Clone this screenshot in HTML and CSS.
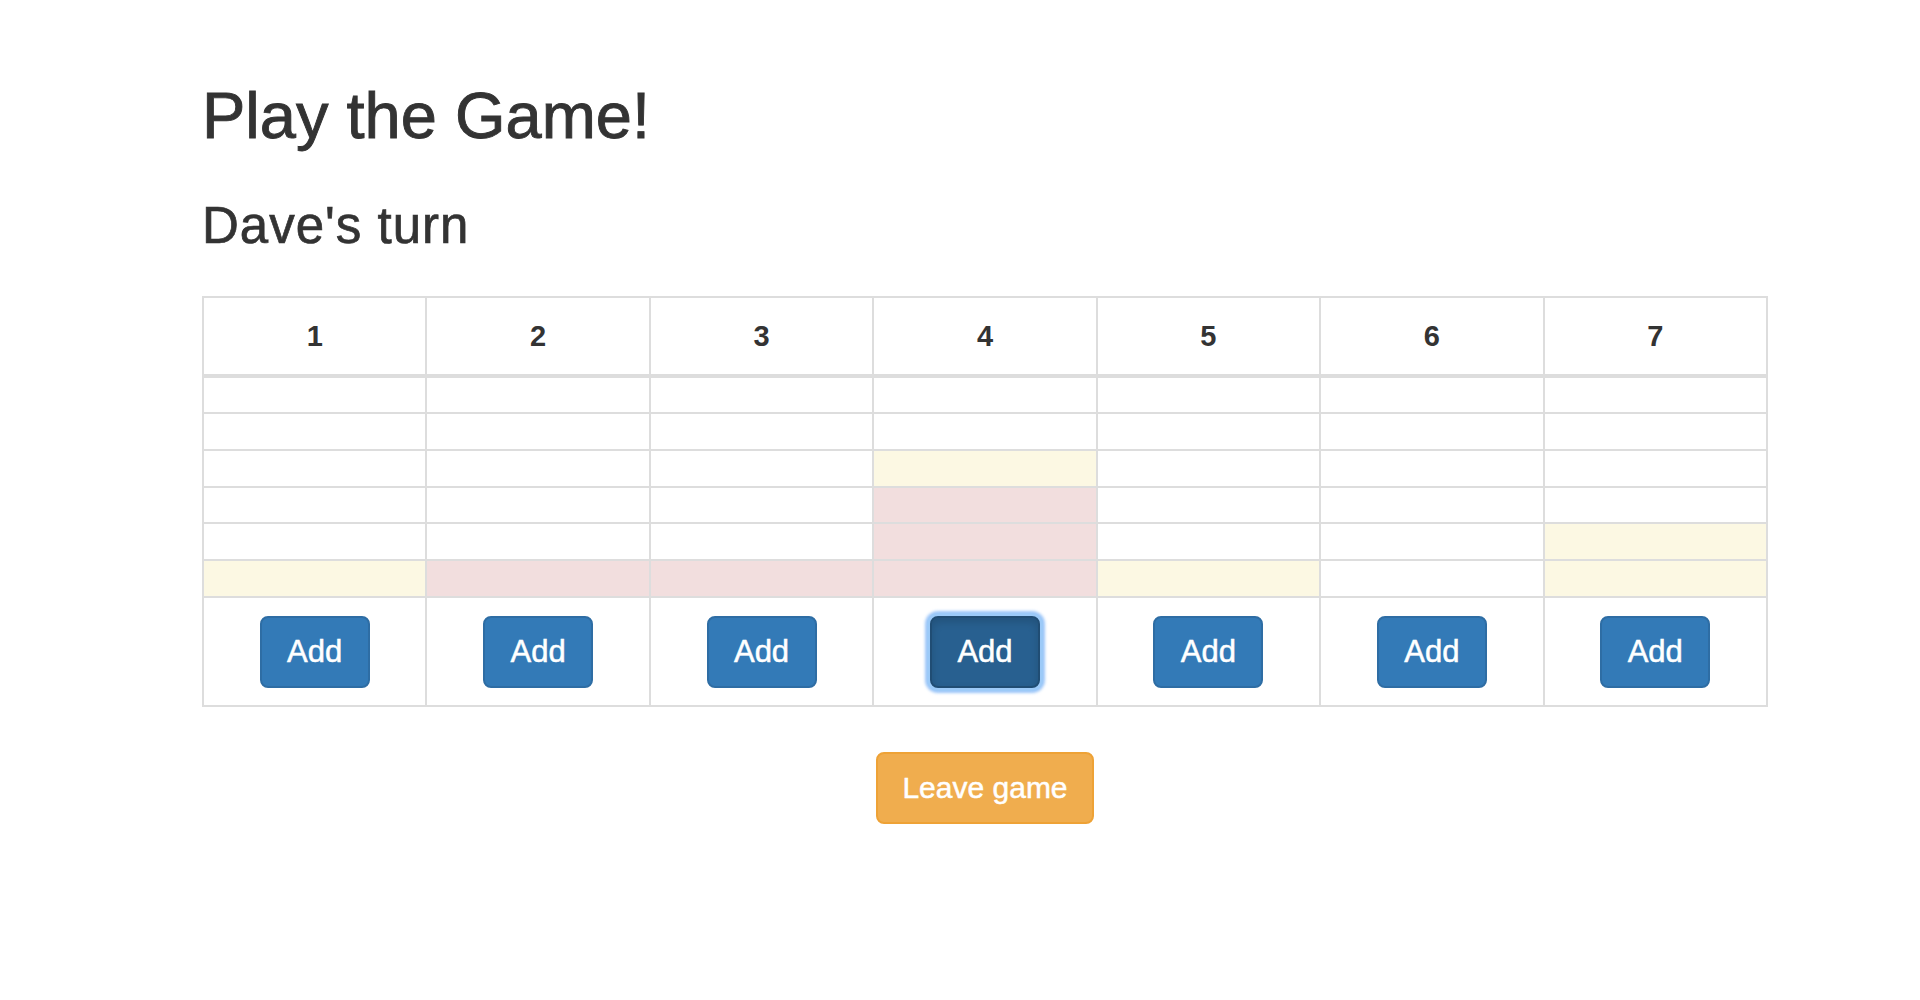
FILE: index.html
```html
<!DOCTYPE html>
<html lang="en">
<head>
<meta charset="utf-8">
<title>Play the Game!</title>
<link rel="stylesheet" href="styles.css">
</head>
<body>
<div class="container">
  <h1 class="title">Play the Game!</h1>
  <h2 class="turn">Dave's turn</h2>
  <table class="board">
    <thead>
      <tr><th>1</th><th>2</th><th>3</th><th>4</th><th>5</th><th>6</th><th>7</th></tr>
    </thead>
    <tbody>
      <tr class="slot"><td></td><td></td><td></td><td></td><td></td><td></td><td></td></tr>
      <tr class="slot"><td></td><td></td><td></td><td></td><td></td><td></td><td></td></tr>
      <tr class="slot"><td></td><td></td><td></td><td class="warning"></td><td></td><td></td><td></td></tr>
      <tr class="slot"><td></td><td></td><td></td><td class="danger"></td><td></td><td></td><td></td></tr>
      <tr class="slot"><td></td><td></td><td></td><td class="danger"></td><td></td><td></td><td class="warning"></td></tr>
      <tr class="slot"><td class="warning"></td><td class="danger"></td><td class="danger"></td><td class="danger"></td><td class="warning"></td><td></td><td class="warning"></td></tr>
      <tr class="actions">
        <td><button class="btn btn-primary">Add</button></td>
        <td><button class="btn btn-primary">Add</button></td>
        <td><button class="btn btn-primary">Add</button></td>
        <td><button class="btn btn-primary is-focused">Add</button></td>
        <td><button class="btn btn-primary">Add</button></td>
        <td><button class="btn btn-primary">Add</button></td>
        <td><button class="btn btn-primary">Add</button></td>
      </tr>
    </tbody>
  </table>
  <div class="leave-row">
    <button class="btn btn-warning">Leave game</button>
  </div>
</div>
</body>
</html>
```

FILE: styles.css
```css
html, body {
  margin: 0;
  padding: 0;
  background: #ffffff;
}

body {
  font-family: "Liberation Sans", Arial, Helvetica, sans-serif;
  color: #333333;
}

.container {
  margin-left: 202px;
  width: 1566px;
  padding-top: 80px;
}

.title {
  margin: 0;
  font-size: 65px;
  font-weight: 400;
  line-height: 1.1;
  -webkit-text-stroke: 0.9px #333333;
}

.turn {
  margin: 46px 0 0 0;
  font-size: 51px;
  font-weight: 400;
  line-height: 1.1;
  letter-spacing: 1px;
  -webkit-text-stroke: 0.7px #333333;
}

.board {
  margin-top: 42px;
  width: 1566px;
  table-layout: fixed;
  border-collapse: collapse;
  border: 2px solid #dddddd;
}

.board th,
.board td {
  border: 2px solid #dddddd;
  text-align: center;
  padding: 0;
}

.board th {
  height: 76px;
  font-size: 29px;
  font-weight: 700;
  line-height: 76px;
  border-bottom-width: 4px;
}

.board .slot td {
  height: 34.67px;
}

.board td.warning {
  background: #fcf8e3;
}

.board td.danger {
  background: #f2dede;
}

.board .actions td {
  padding: 18px 0 17px;
}

.btn {
  display: inline-block;
  box-sizing: border-box;
  height: 72px;
  padding: 0;
  font-family: "Liberation Sans", Arial, Helvetica, sans-serif;
  font-size: 30px;
  font-weight: 400;
  line-height: 68px;
  color: #ffffff;
  border: 2px solid transparent;
  border-radius: 8px;
  vertical-align: middle;
  cursor: pointer;
  -webkit-text-stroke: 0.5px #ffffff;
}

.btn-primary {
  background: #337ab7;
  border-color: #2e6da4;
  width: 110px;
  font-size: 31px;
}

.btn-primary.is-focused {
  background: #286090;
  border-color: #204d74;
  box-shadow: inset 0 4px 8px rgba(0, 0, 0, 0.15), 0 0 0 3px #9ccaf8, 0 0 3px 5px rgba(90, 160, 245, 0.6);
  outline: none;
}

.btn-warning {
  background: #f0ad4e;
  border-color: #eea236;
  width: 218px;
}

.leave-row {
  display: flex;
  justify-content: center;
  margin-top: 45px;
}
```
